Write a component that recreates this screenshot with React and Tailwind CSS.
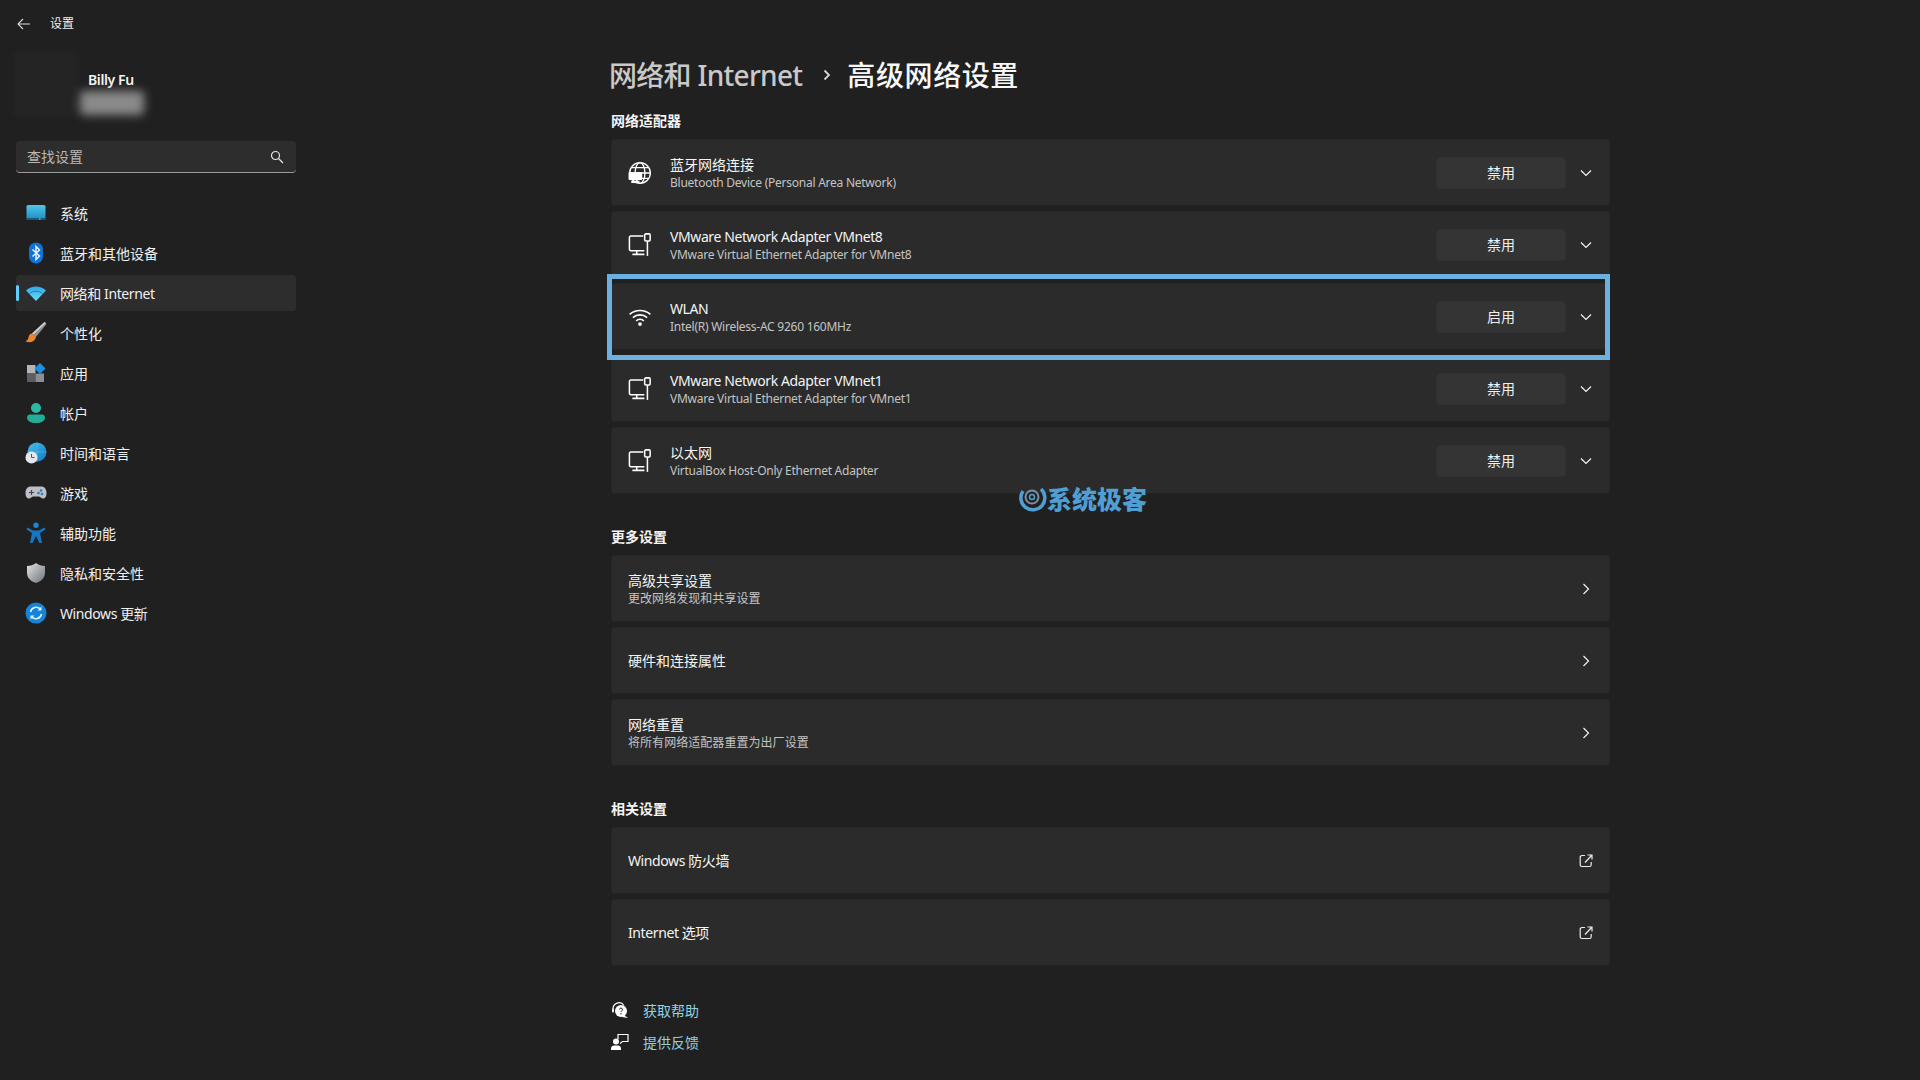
import React from "react";

const latin = (t) => (/[A-Za-z]/.test(t) ? "tracking-[-0.4px]" : "");

const Sys = () => (
  <svg viewBox="0 0 22 22" className="w-[22px] h-[22px]">
    <defs><linearGradient id="sysg" x1="0" y1="0" x2="0" y2="1"><stop offset="0" stopColor="#54c6e6" /><stop offset="1" stopColor="#1e8fc4" /></linearGradient></defs>
    <rect x="1.5" y="3" width="19" height="14" rx="1.5" fill="url(#sysg)" />
    <rect x="1.5" y="16" width="19" height="2" fill="#17597c" />
    <rect x="14" y="16.5" width="1.5" height="1" fill="#9fd8ee" />
  </svg>
);
const Bt = () => (
  <svg viewBox="0 0 22 22" className="w-[22px] h-[22px]">
    <rect x="4" y="0.5" width="14" height="21" rx="7" fill="#0f74d8" />
    <path d="M7.5 7.5l7 6.5-3.5 3.5V4.5L14.5 8l-7 6.5" fill="none" stroke="#e8f4ff" strokeWidth="1.5" />
  </svg>
);
const Wifi = () => (
  <svg viewBox="0 0 22 22" className="w-[22px] h-[22px]">
    <defs><linearGradient id="wfg" x1="0" y1="0" x2="0" y2="1"><stop offset="0" stopColor="#2aa9e8" /><stop offset="1" stopColor="#6fdcf7" /></linearGradient></defs>
    <path d="M1 8.5C6.5 3 15.500 3 21 8.500L11 19Z" fill="url(#wfg)" />
    <path d="M4.500 11.500C8 8.500 14 8.500 17.500 11.500" fill="none" stroke="#1f7fc0" strokeWidth="1" />
  </svg>
);
const Brush = () => (
  <svg viewBox="0 0 22 22" className="w-[22px] h-[22px]">
    <path d="M19.500 0L7 11.500 10.500 15.500 21.500 2Z" fill="#8f8f8f" />
    <path d="M19.500 0L7 11.500l1.200 1.300L21 1Z" fill="#cfcfcf" />
    <path d="M7 11.500C4 11.500 4 14.500 3 17c-.4 1-1.500 1.800-2.500 2.300 3.500 2 8.500 1.200 10.500-3.800Z" fill="#e8872b" />
  </svg>
);
const Apps = () => (
  <svg viewBox="0 0 22 22" className="w-[22px] h-[22px]">
    <rect x="2" y="3" width="8.500" height="8.500" fill="#b5b5b5" />
    <rect x="2" y="11.500" width="8.500" height="8.500" fill="#5a5f66" />
    <rect x="10.500" y="11.500" width="8.500" height="8.500" fill="#8b8f94" />
    <path d="M15 1l5.500 5.500L15 12 9.500 6.500Z" fill="#1c8fe3" />
  </svg>
);
const User = () => (
  <svg viewBox="0 0 22 22" className="w-[22px] h-[22px]">
    <circle cx="11" cy="6" r="5" fill="#2cb9a3" />
    <path d="M2 15.500c0-2 1.500-3 3-3h12c1.500 0 3 1 3 3 0 3.500-3.500 5.500-9 5.500S2 19 2 15.500Z" fill="#23ad98" />
  </svg>
);
const Time = () => (
  <svg viewBox="0 0 22 22" className="w-[22px] h-[22px]">
    <defs><linearGradient id="tmg" x1="0" y1="0" x2="1" y2="1"><stop offset="0" stopColor="#45c1ea" /><stop offset="1" stopColor="#1477c9" /></linearGradient></defs>
    <circle cx="12" cy="10" r="9.500" fill="url(#tmg)" />
    <path d="M12 .5v19M2.500 10h19" stroke="#8ad6f2" strokeWidth=".5" opacity=".6" />
    <circle cx="6.500" cy="15.500" r="6" fill="#e4e7ea" />
    <path d="M6.500 12V15.500H9.500" fill="none" stroke="#4a5560" strokeWidth="1" />
  </svg>
);
const Game = () => (
  <svg viewBox="0 0 22 22" className="w-[22px] h-[22px]">
    <path d="M6 4.500h10c3.500 0 5.500 2.500 5.500 6.500 0 3-1 5.500-3.500 5.500-2 0-2.500-2-4.500-2h-5c-2 0-2.500 2-4.500 2C1.500 16.500.5 14 .5 11 .5 7 2.500 4.500 6 4.500Z" fill="#bcc0c6" />
    <path d="M6.500 8v5M4 10.500h5" stroke="#40464d" strokeWidth="1.200" />
    <circle cx="16" cy="8.500" r="1.300" fill="#2a78c9" /><circle cx="13.500" cy="11" r="1.300" fill="#2a78c9" /><circle cx="17" cy="12" r="1.300" fill="#2a78c9" />
  </svg>
);
const Access = () => (
  <svg viewBox="0 0 22 22" className="w-[22px] h-[22px]">
    <circle cx="11" cy="3.200" r="2.700" fill="#1b85d6" />
    <path d="M2.500 5.500L8 8.500h6l5.500-3 1 2L15 11l2 10h-2.500L11 14l-3.500 7H5L7 11 1.500 7.500Z" fill="#1577c4" />
  </svg>
);
const Shield = () => (
  <svg viewBox="0 0 22 22" className="w-[22px] h-[22px]">
    <defs><linearGradient id="shg" x1="0" y1="0" x2="1" y2="1"><stop offset="0" stopColor="#e2e3e5" /><stop offset="1" stopColor="#6e7277" /></linearGradient></defs>
    <path d="M11 1c2.500 2 5.500 3 9 3v7c0 5-4 8.500-9 10C6 19.500 2 16 2 11V4c3.500 0 6.500-1 9-3Z" fill="url(#shg)" />
  </svg>
);
const Update = () => (
  <svg viewBox="0 0 22 22" className="w-[22px] h-[22px]">
    <circle cx="11" cy="11" r="10.500" fill="#1683d6" />
    <path d="M5.500 10a5.800 5.800 0 0 1 10-2.800M16.500 12a5.800 5.800 0 0 1-10 2.800" fill="none" stroke="#d8f2ff" strokeWidth="1.600" />
    <path d="M16.500 4.500v4h-4ZM5.500 17.500v-4h4Z" fill="#d8f2ff" />
  </svg>
);

const Globe = () => (
  <svg viewBox="0 0 22 22" className="w-6 h-6" fill="none" stroke="#fff" strokeWidth="1.200">
    <circle cx="11" cy="11" r="9.500" />
    <ellipse cx="11" cy="11" rx="4.500" ry="9.500" />
    <path d="M1.500 11h19M3 6h16M3 16h16" />
    <rect x="0.500" y="10" width="12.500" height="7.500" rx="1" fill="#fff" stroke="none" />
    <rect x="3" y="18" width="7.500" height="2.200" fill="#fff" stroke="none" />
  </svg>
);
const NetMon = () => (
  <svg viewBox="0 0 22 22" className="w-6 h-6" fill="none" stroke="#fff" strokeWidth="1.400">
    <path d="M14 2.800H2.500a1.200 1.200 0 0 0-1.200 1.200v11a1.200 1.200 0 0 0 1.200 1.200H15" />
    <path d="M8 16.500v3M4 19.600h11" />
    <rect x="15.300" y="0.800" width="5" height="6.500" rx="1" />
    <path d="M17.800 7.300v13.700" />
  </svg>
);
const WifiLine = () => (
  <svg viewBox="0 0 22 22" className="w-6 h-6" fill="none" stroke="#fff" strokeWidth="1.500">
    <path d="M1.500 8.500c5.300-4.600 13.700-4.600 19 0M4.500 11.500c3.700-3.200 9.300-3.200 13 0M7.500 14.500c2-1.800 5-1.800 7 0" />
    <circle cx="11" cy="17.500" r="1.700" fill="#fff" stroke="none" />
  </svg>
);
const ChevDown = () => (
  <svg viewBox="0 0 12 12" className="w-3 h-3" fill="none" stroke="#f2f2f2" strokeWidth="1.200"><path d="M1 3.500l5 5 5-5" /></svg>
);
const ChevRight = () => (
  <svg viewBox="0 0 12 12" className="w-3 h-3" fill="none" stroke="#f2f2f2" strokeWidth="1.200"><path d="M3.500 1l5 5-5 5" /></svg>
);
const External = () => (
  <svg viewBox="0 0 14 14" className="w-[14px] h-[14px]" fill="none" stroke="#ececec" strokeWidth="1.200">
    <path d="M6 1.500H3A1.800 1.800 0 0 0 1.200 3.300v7.400A1.800 1.800 0 0 0 3 12.500h7.400a1.800 1.800 0 0 0 1.800-1.800V8" />
    <path d="M6 8.500L12.500 1.500M8.500 1h4.500v4.500" />
  </svg>
);
const Help = () => (
  <svg viewBox="0 0 18 18" className="w-[18px] h-[18px]">
    <path d="M2 8a6 6 0 0 1 11-3.500" fill="none" stroke="#fff" strokeWidth="1.200" />
    <rect x="1" y="7.500" width="2" height="4" rx="1" fill="#fff" />
    <circle cx="10" cy="10" r="6" fill="#fff" />
    <path d="M13 14l4 3-6-1Z" fill="#fff" />
    <path d="M8.500 8.500a1.500 1.500 0 1 1 2 1.500c-.4.200-.5.500-.5 1" fill="none" stroke="#202020" strokeWidth="1" />
    <circle cx="10" cy="12.800" r=".7" fill="#202020" />
  </svg>
);
const Feedback = () => (
  <svg viewBox="0 0 18 18" className="w-[18px] h-[18px]">
    <circle cx="5" cy="8.500" r="3" fill="#fff" />
    <path d="M0 17v-1.500C0 13.500 1.500 12.500 3 12.500h4c1.500 0 3 1 3 3V17Z" fill="#fff" />
    <path d="M7 6V1.500h10v7h-5.500L9 10.500" fill="none" stroke="#fff" strokeWidth="1.200" />
  </svg>
);
const Search = () => (
  <svg viewBox="0 0 14 14" className="w-[14px] h-[14px]" fill="none" stroke="#e5e5e5" strokeWidth="1.200">
    <circle cx="5.500" cy="5.500" r="4" /><path d="M8.500 8.500l4.500 4.500" />
  </svg>
);

const nav = [
  [Sys, "系统"], [Bt, "蓝牙和其他设备"], [Wifi, "网络和 Internet", true], [Brush, "个性化"], [Apps, "应用"], [User, "帐户"],
  [Time, "时间和语言"], [Game, "游戏"], [Access, "辅助功能"], [Shield, "隐私和安全性"], [Update, "Windows 更新"],
];
const adapters = [
  [Globe, "蓝牙网络连接", "Bluetooth Device (Personal Area Network)", "禁用"],
  [NetMon, "VMware Network Adapter VMnet8", "VMware Virtual Ethernet Adapter for VMnet8", "禁用"],
  [WifiLine, "WLAN", "Intel(R) Wireless-AC 9260 160MHz", "启用", true],
  [NetMon, "VMware Network Adapter VMnet1", "VMware Virtual Ethernet Adapter for VMnet1", "禁用"],
  [NetMon, "以太网", "VirtualBox Host-Only Ethernet Adapter", "禁用"],
];

const Card = ({ children, className = "" }) => (
  <div className={"h-[67px] flex items-center rounded-[4px] bg-[#2b2b2b] border border-[#272727] border-b-[#242424] " + className}>{children}</div>
);
const Text = ({ title, sub }) => (
  <div className={"flex-1 min-w-0 " + (sub ? "pt-[2px]" : "")}>
    <div className={"text-[14px] leading-[18px] text-[#f5f5f5] " + latin(title)}>{title}</div>
    {sub && <div className={"mt-[1px] text-[12px] leading-[16px] text-[#c4c4c4] " + (/[A-Za-z]/.test(sub) ? "tracking-[-0.25px]" : "tracking-[0.05px]")}>{sub}</div>}
  </div>
);
const Trail = ({ children }) => <div className="w-10 mr-[3px] flex justify-center">{children}</div>;
const LinkCard = ({ title, sub, icon }) => (
  <Card><div className="w-4" /><Text title={title} sub={sub} /><Trail>{icon}</Trail></Card>
);
const Label = ({ children, className = "" }) => (
  <div className={"text-[14px] leading-[20px] font-semibold text-[#f5f5f5] " + className}>{children}</div>
);

export default function App() {
  return (
    <div className="relative w-[1920px] h-[1080px] overflow-hidden flex bg-[#202020] text-white font-['Noto_Sans','Noto_Sans_CJK_SC',sans-serif]">
      <aside className="w-[312px] shrink-0 px-4">
        <div className="h-12 flex items-center">
          <svg viewBox="0 0 14 14" className="w-[14px] h-[14px] ml-[1px]" fill="none" stroke="#d8d8d8" strokeWidth="1.100"><path d="M13 7H1M6 2L1 7l5 5" /></svg>
          <span className="ml-[19px] text-[12px] text-[#f0f0f0]">设置</span>
        </div>
        <div className="mt-1 -ml-[2px] h-16 flex">
          <div className="w-16 h-16 bg-[#242424] blur-[2px]" />
          <div className="ml-[2px]">
            <div className="ml-2 mt-[18px] text-[14px] leading-[20px] font-semibold text-[#f5f5f5] tracking-[-0.4px]">Billy Fu</div>
            <div className="mt-[1px] w-[64px] h-[24px] rounded-[4px] bg-[#8a8a8a] blur-[5px]" />
          </div>
        </div>
        <div className="mt-[25px] h-8 flex items-center justify-between pl-[11px] pr-3 rounded-[4px] bg-[#2d2d2d] border-b border-[#9a9a9a]">
          <span className="text-[14px] text-[#b8b8b8]">查找设置</span>
          <Search />
        </div>
        <nav className="mt-[22px] flex flex-col gap-1">
          {nav.map(([I, t, active]) => (
            <div key={t} className={"relative h-9 flex items-center pl-[9px] rounded-[4px] " + (active ? "bg-[#2d2d2d]" : "")}>
              {active && <span className="absolute left-0 top-[10px] w-[3px] h-4 rounded-[2px] bg-[#60cdff]" />}
              <I />
              <span className={"ml-[13px] text-[14px] text-[#f0f0f0] " + latin(t)}>{t}</span>
            </div>
          ))}
        </nav>
      </aside>
      <main className="ml-[299px] w-[999px] shrink-0">
        <h1 className="mt-[55px] h-10 -ml-[2px] flex items-center text-[28px] leading-[40px] font-medium">
          <span className="text-[#c9c9c9] tracking-[-0.7px]">网络和 Internet</span>
          <svg viewBox="0 0 12 12" className="w-3 h-3 ml-[19px] mr-[14px]" fill="none" stroke="#d5d5d5" strokeWidth="1.800"><path d="M3.500 1.500L8 6l-4.500 4.500" /></svg>
          <span className="text-[#f8f8f8] tracking-[0.6px]">高级网络设置</span>
        </h1>
        <Label className="mt-4">网络适配器</Label>
        <div className="mt-2 flex flex-col gap-[5px]">
          {adapters.map(([I, t, s, b, hi]) => (
            <Card key={t} className={"relative " + (hi ? "z-10" : "")}>
              <div className="ml-4 mr-[18px] w-6 flex"><I /></div>
              <Text title={t} sub={s} />
              <div className="w-[130px] h-8 flex items-center justify-center rounded-[4px] bg-[#343434] border border-[#303030] text-[14px] text-[#f0f0f0]">{b}</div>
              <Trail><ChevDown /></Trail>
              {hi && <div className="absolute -left-[5px] -right-[1px] -top-[10px] -bottom-[11px] border-[5px] border-[#6cb0e0]" />}
            </Card>
          ))}
        </div>
        <Label className="mt-[33px]">更多设置</Label>
        <div className="mt-2 flex flex-col gap-[5px]">
          <LinkCard title="高级共享设置" sub="更改网络发现和共享设置" icon={<ChevRight />} />
          <LinkCard title="硬件和连接属性" icon={<ChevRight />} />
          <LinkCard title="网络重置" sub="将所有网络适配器重置为出厂设置" icon={<ChevRight />} />
        </div>
        <Label className="mt-[33px]">相关设置</Label>
        <div className="mt-2 flex flex-col gap-[5px]">
          <LinkCard title="Windows 防火墙" icon={<External />} />
          <LinkCard title="Internet 选项" icon={<External />} />
        </div>
        <div className="mt-[28px] flex flex-col">
          {[[Help, "获取帮助"], [Feedback, "提供反馈"]].map(([I, t]) => (
            <div key={t} className="h-8 flex items-center">
              <I />
              <span className="ml-[14px] text-[14px] text-[#8fd3e6]">{t}</span>
            </div>
          ))}
        </div>
      </main>
      <div className="absolute left-[1017px] top-[483px] z-20 flex items-center text-[#4f9fd4]">
        <svg viewBox="0 0 30 30" className="w-[30px] h-[30px]" fill="none">
          <path d="M6 8a12 12 0 1 0 18 -2" stroke="#4f9fd4" strokeWidth="3.500" />
          <circle cx="15" cy="14" r="6.500" stroke="#7d8f9c" strokeWidth="2" />
          <circle cx="15" cy="14" r="2.500" stroke="#4f9fd4" strokeWidth="1.500" />
        </svg>
        <span className="text-[25px] leading-[30px] font-black font-['Noto_Sans_CJK_SC',sans-serif]">系统极客</span>
      </div>
    </div>
  );
}
